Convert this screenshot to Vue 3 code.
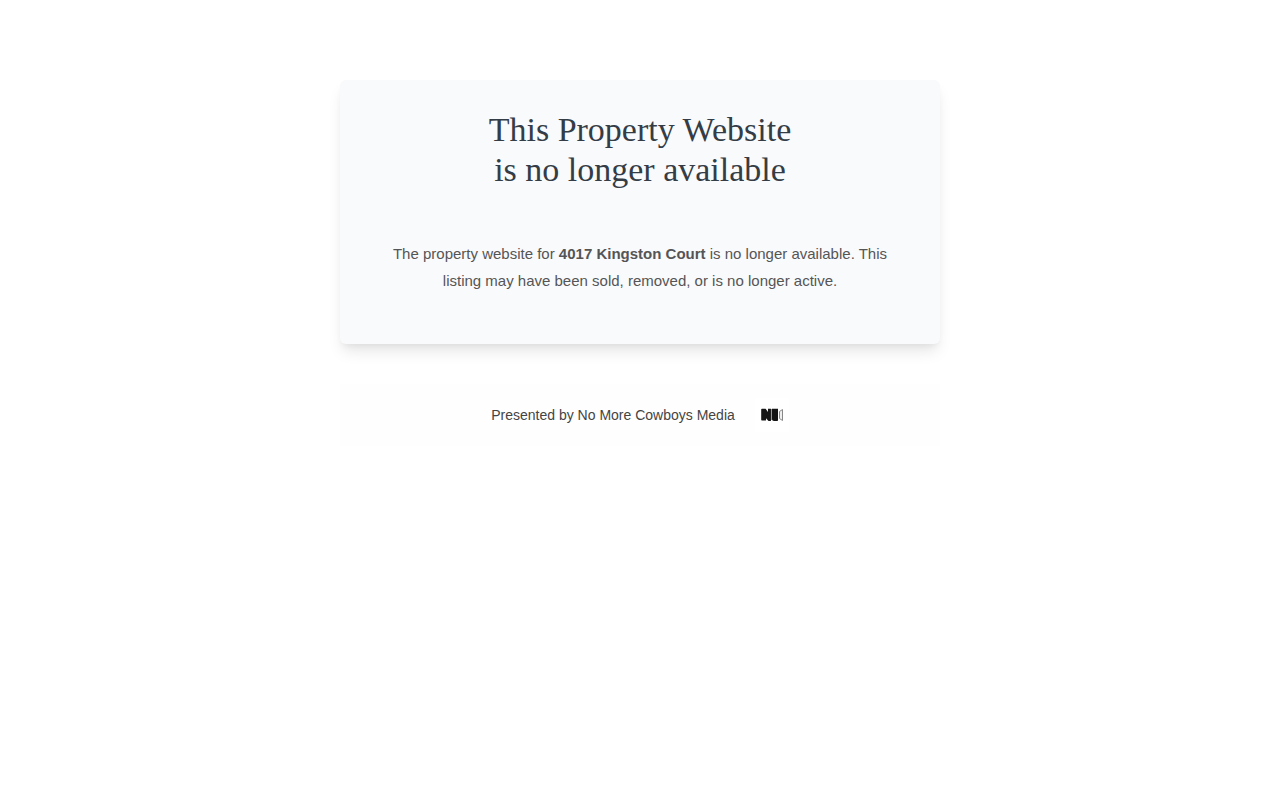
<script setup>
const address = '4017 Kingston Court'
const presenter = 'No More Cowboys Media'
</script>

<template>
  <main class="page">
    <section class="card">
      <h1>This Property Website<br />is no longer available</h1>
      <p class="message">The property website for <strong>{{ address }}</strong> is no longer available. This listing may have been sold, removed, or is no longer active.</p>
    </section>
    <footer class="presenter">
      <span>Presented by {{ presenter }}</span>
      <svg class="logo" viewBox="0 0 34 34" role="img" aria-label="No More Cowboys Media">
        <path class="seam" d="M14 11h4v11h-4z" />
        <path class="solid" d="M6.200 11.500q0-.8.8-.8h3.600l2.400 3.300v-3.300h2.900v12.400h-2.400l-2.500-2.800v1.700q0 .5-.5.500h-3.600q-.7 0-.7-.7z" />
        <path class="solid" d="M17 10.700h6v11.600q0 .8-.8.800h-3.200q-2 0-2-1.800z" />
        <path class="lens" d="M24.500 13.500l3-2v11l-3-2z" />
      </svg>
    </footer>
  </main>
</template>

<style>
body {
  background: #fff;
}
</style>

<style scoped>
.page {
  box-sizing: border-box;
  max-width: 600px;
  margin: 0 auto;
  padding-top: 80px;
  font-family: "Liberation Sans", Arial, sans-serif;
}
.card {
  padding: 30px 40px 50px;
  border-radius: 6px;
  background: #f9fafc;
  box-shadow: 0 10px 15px -3px rgba(0, 0, 0, 0.1), 0 4px 6px -2px rgba(0, 0, 0, 0.05);
  text-align: center;
}
h1 {
  margin: 0 0 50px;
  color: #343d46;
  font: 400 34px/40px "Liberation Serif", "Times New Roman", serif;
}
.message {
  margin: 0;
  color: #555;
  font-size: 15px;
  line-height: 27px;
}
.presenter {
  display: flex;
  align-items: center;
  justify-content: center;
  gap: 20px;
  margin-top: 40px;
  padding: 14px;
  background: #fefefe;
  color: #444;
  font-size: 14px;
  line-height: 20px;
}
.logo {
  width: 34px;
  height: 34px;
  background: #fff;
}
.seam {
  fill: #999;
}
.solid {
  fill: #151515;
}
.lens {
  fill: #eee;
  stroke: #888;
  stroke-width: 1;
}
</style>
